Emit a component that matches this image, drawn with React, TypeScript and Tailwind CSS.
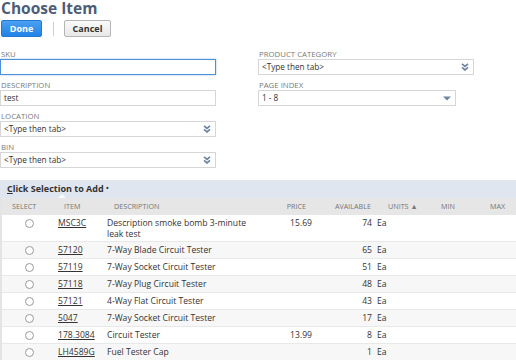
import React from "react";

const DoubleChevron = () => (
  <svg width="8" height="8" viewBox="0 0 8 8" className="shrink-0">
    <path d="M1 0.8 L4 3.4 L7 0.8" fill="none" stroke="#6f83a3" strokeWidth="1.7" />
    <path d="M1 4.4 L4 7 L7 4.4" fill="none" stroke="#6f83a3" strokeWidth="1.7" />
  </svg>
);

const Tri = () => (
  <svg width="8" height="5" viewBox="0 0 8 5" className="shrink-0">
    <path d="M0 0.5 L8 0.5 L4 4.5 Z" fill="#6f83a3" />
  </svg>
);

function Label({ children }: { children: React.ReactNode }) {
  return (
    <div className="h-[10px] leading-[10px] text-[7.8px] uppercase text-[#7a7a7a] pl-[1px]">{children}</div>
  );
}

function Field({
  label,
  value,
  kind,
  focused,
  width,
}: {
  label: string;
  value?: string;
  kind: "text" | "multi" | "single";
  focused?: boolean;
  width?: string;
}) {
  return (
    <div className="mb-[5px]">
      <Label>{label}</Label>
      <div
        className={`h-[16px] flex items-center justify-between pl-[3px] pr-[4px] text-[8.2px] text-[#333] bg-white ${
          focused ? "border border-[#4f8fd8] shadow-[0_0_2px_#9cc3ee]" : "border border-[#d6d6d6]"
        } ${width ?? "w-[216px]"}`}
      >
        <span>{value}</span>
        {kind === "multi" && <DoubleChevron />}
        {kind === "single" && <Tri />}
      </div>
    </div>
  );
}

const rows = [
  { item: "MSC3C", desc: "Description smoke bomb 3-minute leak test", price: "15.69", avail: "74" },
  { item: "57120", desc: "7-Way Blade Circuit Tester", price: "", avail: "65" },
  { item: "57119", desc: "7-Way Socket Circuit Tester", price: "", avail: "51" },
  { item: "57118", desc: "7-Way Plug Circuit Tester", price: "", avail: "48" },
  { item: "57121", desc: "4-Way Flat Circuit Tester", price: "", avail: "43" },
  { item: "5047", desc: "7-Way Socket Circuit Tester", price: "", avail: "17" },
  { item: "178.3084", desc: "Circuit Tester", price: "13.99", avail: "8" },
  { item: "LH4589G", desc: "Fuel Tester Cap", price: "", avail: "1" },
];

export default function App() {
  return (
    <div className="w-[516px] h-[360px] overflow-hidden bg-white font-['Open_Sans',sans-serif] text-[#333]">
      <div className="pl-[1px] h-[17px] text-[15.5px] leading-[17px] font-bold text-[#4d5d77]">
        Choose Item
      </div>
      <div className="mt-[3px] flex items-center pl-[1px] h-[17px]">
        <div className="w-[41px] h-[17px] rounded-[2px] bg-gradient-to-b from-[#4aa0f2] to-[#1f82e6] border border-[#2479d2] text-white text-[9px] font-bold flex items-center justify-center">
          Done
        </div>
        <div className="ml-[11px] w-px h-[14px] bg-[#cfcfcf]" />
        <div className="ml-[10px] w-[47px] h-[17px] rounded-[2px] bg-gradient-to-b from-[#fafafa] to-[#e8e8e8] border border-[#b5b5b5] text-[#333] text-[9px] font-bold flex items-center justify-center">
          Cancel
        </div>
      </div>
      <div className="mt-[12px] flex">
        <div className="w-[216px]">
          <Field label="SKU" value="" kind="text" focused />
          <Field label="Description" value="test" kind="text" />
          <Field label="Location" value="<Type then tab>" kind="multi" />
          <Field label="Bin" value="<Type then tab>" kind="multi" />
        </div>
        <div className="ml-[42px] w-[216px]">
          <Field label="Product Category" value="<Type then tab>" kind="multi" />
          <Field label="Page Index" value="1 - 8" kind="single" width="w-[198px]" />
        </div>
      </div>
      <div className="mt-[7px] relative h-[18px] bg-[#e0e6ef] flex items-center pl-[7px]">
        <span className="text-[9px] font-bold text-[#333]">
          <span className="underline">C</span>lick Selection to Add <span className="text-[7px] align-middle">•</span>
        </span>
        <div className="absolute left-[58px] bottom-0 w-0 h-0 border-l-[4px] border-r-[4px] border-b-[4px] border-l-transparent border-r-transparent border-b-white opacity-80" />
      </div>
      <div className="border-l-2 border-[#e4e4e4]">
        <div className="h-[17px] bg-[#e6e6e6] flex items-center text-[7.2px] uppercase text-[#777]">
          <div className="w-[56px] pl-[10px]">Select</div>
          <div className="w-[49px] pl-[6px]">Item</div>
          <div className="w-[150px] pl-[7px]">Description</div>
          <div className="w-[55px] text-right pr-[6px]">Price</div>
          <div className="w-[60px] text-right pr-[1px]">Available</div>
          <div className="w-[58px] pl-[16px]">Units ▲</div>
          <div className="w-[45px] pl-[11px]">Min</div>
          <div className="pl-[15px]">Max</div>
        </div>
        {rows.map((r, i) => (
          <div
            key={r.item}
            className={`flex items-start pt-[3px] leading-[11px] text-[8.6px] text-[#333] ${
              i > 0 ? "border-t border-[#e8e8e8] pb-[2px]" : "pb-[1px]"
            } ${i % 2 === 1 ? "bg-[#f7f7f7]" : "bg-white"}`}
          >
            <div className="w-[56px] h-[11px] flex items-center">
              <div className="ml-[23px] w-[9px] h-[9px] rounded-full border border-[#9a9a9a] bg-white" />
            </div>
            <div className="w-[49px] underline">{r.item}</div>
            <div className="w-[150px]">{r.desc}</div>
            <div className="w-[55px] text-right">{r.price}</div>
            <div className="w-[60px] text-right">{r.avail}</div>
            <div className="pl-[5px]">Ea</div>
          </div>
        ))}
      </div>
    </div>
  );
}
